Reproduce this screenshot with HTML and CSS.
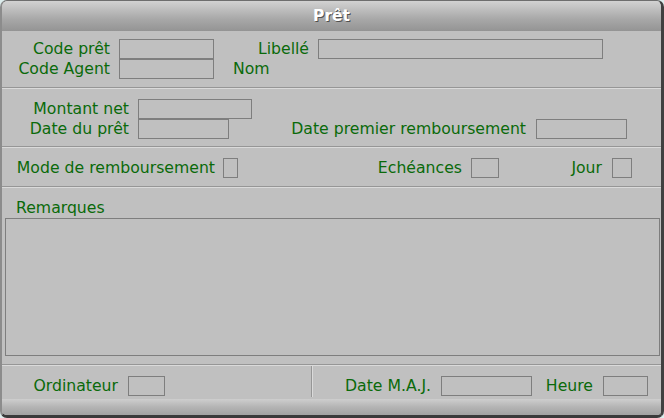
FILE: index.html
```html
<!DOCTYPE html>
<html lang="fr">
<head>
<meta charset="utf-8">
<title>Prêt</title>
<link rel="stylesheet" href="styles.css">
</head>
<body>
<div class="win">
  <div class="title">Prêt</div>
  <div class="body">
    <div class="sec sec1">
      <div class="row">
        <span class="lbl w108">Code prêt</span><span class="fld f95"></span>
        <span class="lbl w95">Libellé</span><span class="fld f285"></span>
      </div>
      <div class="row">
        <span class="lbl w108">Code Agent</span><span class="fld f95"></span>
        <span class="lbl nom">Nom</span>
      </div>
    </div>
    <div class="sep"></div>
    <div class="sec sec2">
      <div class="row">
        <span class="lbl w127">Montant net</span><span class="fld f114"></span>
      </div>
      <div class="row">
        <span class="lbl w127">Date du prêt</span><span class="fld f91"></span>
        <span class="lbl w297">Date premier remboursement</span><span class="fld f91 ml10"></span>
      </div>
    </div>
    <div class="sep"></div>
    <div class="sec sec3">
      <div class="row">
        <span class="lbl w213">Mode de remboursement</span><span class="fld f14 ml8"></span>
        <span class="lbl w223">Echéances</span><span class="fld f28"></span>
        <span class="lbl w103">Jour</span><span class="fld f19 ml11"></span>
      </div>
    </div>
    <div class="sep"></div>
    <div class="sec sec4">
      <div class="rem-lbl">Remarques</div>
      <div class="memo"></div>
    </div>
    <div class="sep"></div>
    <div class="footer">
      <div class="cell left">
        <span class="lbl w116">Ordinateur</span><span class="fld f37 ml10"></span>
      </div>
      <div class="vdiv"></div>
      <div class="cell right">
        <span class="lbl w118">Date M.A.J.</span><span class="fld f91 ml10"></span>
        <span class="lbl w61">Heure</span><span class="fld f45 ml10"></span>
      </div>
    </div>
  </div>
  <div class="bottombar"></div>
</div>
</body>
</html>
```
FILE: styles.css
```css
html, body {
  margin: 0;
  padding: 0;
  background: #dcecec;
}
.win {
  width: 664px;
  height: 418px;
  box-sizing: border-box;
  background: #c0c0c0;
  border-top: 1px solid #6e6e6e;
  border-left: 2px solid #8c8c8c;
  border-right: 3px solid #404040;
  border-bottom: 3px solid #3a3a3a;
  border-radius: 7px;
  overflow: hidden;
  display: flex;
  flex-direction: column;
  font-family: "DejaVu Sans", Verdana, sans-serif;
  font-size: 15.7px;
  color: #0a6a0a;
}
.title {
  height: 30px;
  line-height: 31px;
  text-align: center;
  color: #ffffff;
  font-weight: bold;
  font-size: 15.5px;
  text-shadow: 1px 1px 0 #505050;
  background: linear-gradient(#d2d2d2, #a8a8a8 60%, #949494);
}
.body {
  flex: 1;
  display: flex;
  flex-direction: column;
}
.sec1 { padding: 8px 0 8px 0; height: 40px; }
.sec2 { padding: 10px 0 7px 0; height: 40px; }
.sec3 { padding: 10px 0 8px 0; height: 20px; }
.sec4 { padding: 10px 0 8px 0; display: flex; flex-direction: column; }
.row {
  display: flex;
  align-items: center;
  height: 20px;
}
.lbl {
  display: inline-block;
  text-align: right;
  white-space: nowrap;
  line-height: 20px;
  margin-right: 9px;
}
.fld {
  display: inline-block;
  box-sizing: border-box;
  height: 20px;
  border: 1px solid #7e7e7e;
}
.sep {
  height: 0;
  border-top: 1px solid #969696;
  border-bottom: 1px solid #dadada;
}
.w108 { width: 108px; }
.w95 { width: 95px; }
.w127 { width: 127px; }
.w297 { width: 297px; }
.w213 { width: 213px; }
.w223 { width: 224px; }
.w103 { width: 103px; }
.w116 { width: 116px; }
.w118 { width: 118px; }
.w61 { width: 61px; }
.nom { text-align: left; margin-left: 19px; }
.f95 { width: 95px; }
.f285 { width: 285px; }
.f114 { width: 114px; }
.f91 { width: 91px; }
.f14 { width: 15px; }
.f28 { width: 28px; }
.f19 { width: 20px; }
.f37 { width: 37px; }
.f45 { width: 45px; }
.ml8 { margin-left: -1px; }
.ml10 { margin-left: 1px; }
.ml11 { margin-left: 1px; }
.rem-lbl {
  height: 20px;
  line-height: 20px;
  padding-left: 14px;
}
.memo {
  box-sizing: border-box;
  height: 138px;
  margin-left: 3px;
  width: 655px;
  border: 1px solid #7e7e7e;
}
.footer {
  display: flex;
  height: 33px;
}
.cell {
  display: flex;
  align-items: flex-start;
  padding-top: 10px;
}
.cell.left { width: 309px; }
.vdiv {
  width: 0;
  border-left: 1px solid #969696;
  border-right: 1px solid #dadada;
  margin-bottom: 2px;
}
.bottombar {
  height: 16px;
  background: linear-gradient(#cecece, #b4b4b4 50%, #a2a2a2);
}
```
